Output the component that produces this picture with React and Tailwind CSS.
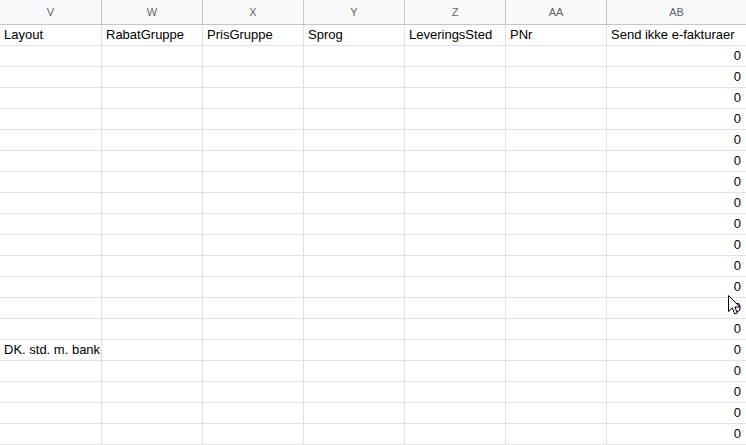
const COLUMNS = [
  { letter: 'V', title: 'Layout', w: 'w-[102px]' },
  { letter: 'W', title: 'RabatGruppe', w: 'w-[101px]' },
  { letter: 'X', title: 'PrisGruppe', w: 'w-[101px]' },
  { letter: 'Y', title: 'Sprog', w: 'w-[101px]' },
  { letter: 'Z', title: 'LeveringsSted', w: 'w-[101px]' },
  { letter: 'AA', title: 'PNr', w: 'w-[101px]' },
  { letter: 'AB', title: 'Send ikke e-fakturaer', w: 'flex-1' },
];

const ROW_COUNT = 20;

// Layout column values by row index (0 = first data row)
const LAYOUT_VALUES = { 14: 'DK. std. m. bank' };

function Cursor() {
  return (
    <svg
      className="absolute left-[727px] top-[294px]"
      width="14"
      height="22"
      viewBox="0 0 14 22"
    >
      <path
        d="M1.5 1.5 L1.5 17.5 L5.2 13.9 L7.8 20 L10.3 18.9 L7.8 13 L12.8 13 Z"
        fill="#fff"
        stroke="#000"
        strokeWidth="1"
        strokeLinejoin="miter"
      />
    </svg>
  );
}

export default function App() {
  return (
    <div
      className="relative w-[746px] h-[445px] overflow-hidden bg-white text-black"
      style={{ fontFamily: '"Liberation Sans", Arial, sans-serif' }}
    >
      {/* Column letters */}
      <div className="flex h-[25px] bg-[#f8f9fa] border-b border-[#c4c7c5]">
        {COLUMNS.map((c, i) => (
          <div
            key={c.letter}
            className={`${c.w} flex items-center justify-center text-[11px] text-[#5f6368] ${
              i < COLUMNS.length - 1 ? 'border-r border-[#c4c7c5]' : ''
            }`}
          >
            {c.letter}
          </div>
        ))}
      </div>

      {/* Title row */}
      <div className="flex h-[21px] border-b border-[#e1e1e1]">
        {COLUMNS.map((c, i) => (
          <div
            key={c.letter}
            className={`${c.w} flex items-end pl-[4px] pb-[2px] text-[13px] leading-[16px] whitespace-nowrap overflow-hidden ${
              i < COLUMNS.length - 1 ? 'border-r border-[#e1e1e1]' : ''
            }`}
          >
            {c.title}
          </div>
        ))}
      </div>

      {/* Data rows */}
      {Array.from({ length: ROW_COUNT }).map((_, r) => (
        <div key={r} className="flex h-[21px] border-b border-[#e1e1e1]">
          {COLUMNS.map((c, i) => {
            const last = i === COLUMNS.length - 1;
            return (
              <div
                key={c.letter}
                className={`${c.w} flex items-end pb-[2px] text-[13px] leading-[16px] whitespace-nowrap overflow-hidden ${
                  last ? 'justify-end pr-[5px]' : 'pl-[4px] border-r border-[#e1e1e1]'
                }`}
              >
                {i === 0 && LAYOUT_VALUES[r]}
                {last && '0'}
              </div>
            );
          })}
        </div>
      ))}

      <Cursor />
    </div>
  );
}
